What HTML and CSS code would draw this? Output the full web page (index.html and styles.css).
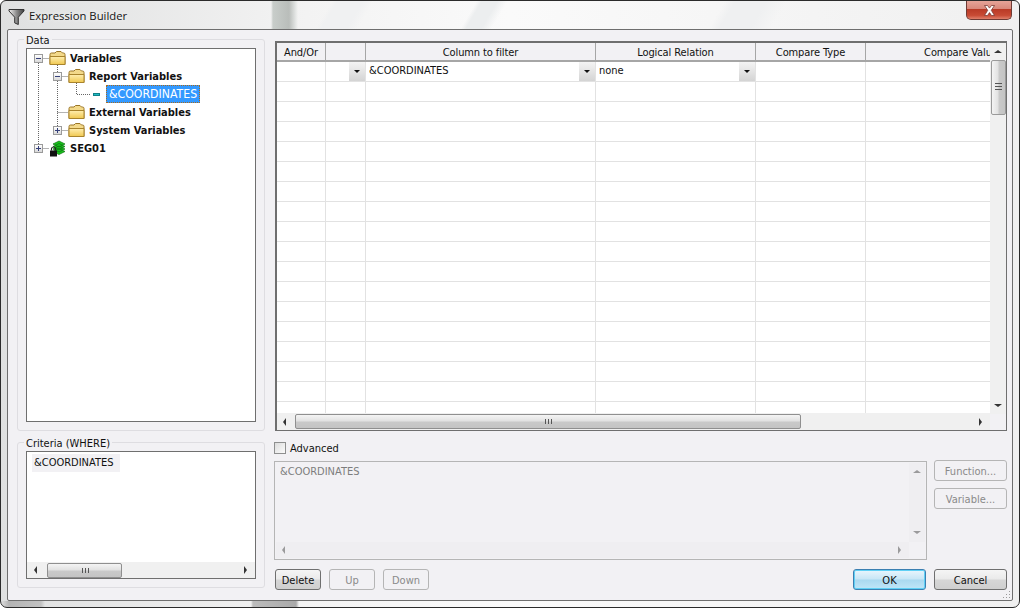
FILE: index.html
```html
<!DOCTYPE html>
<html lang="en">
<head>
<meta charset="utf-8">
<title>Expression Builder</title>
<link rel="stylesheet" href="styles.css">
</head>
<body>
<div class="window">
  <header class="titlebar">
    <svg class="funnel" width="17" height="18" viewBox="0 0 17 18"><defs><linearGradient id="fg" x1="0" x2="1" y1="0" y2="0"><stop offset="0" stop-color="#f2f2f2"/><stop offset=".5" stop-color="#8d8d8d"/><stop offset="1" stop-color="#3d3d3d"/></linearGradient></defs><path d="M1 1.500h15v1.500L10.300 9.200v7.300l-3.600-1.600V9.200L1 3z" fill="url(#fg)" stroke="#333" stroke-width="1"/></svg>
    <span class="wintitle">Expression Builder</span>
    <button class="close"><svg width="13" height="11" viewBox="0 0 13 11"><path d="M1.500 .5h3l2 2.600 2-2.600h3L8.300 5.300 11.500 10.500h-3l-2-2.900-2 2.900h-3l3.200-5.200z" fill="#fff" stroke="#7a3b33" stroke-width=".8"/></svg></button>
  </header>
  <main class="client">
    <div class="leftcol">
      <section class="group data">
        <span class="legend">Data</span>
        <div class="tree">
          <svg class="treelines" width="90" height="110" viewBox="0 0 90 110"><path d="M11.500 14V95M11.500 9.500H22M30.500 14V77M30.500 27.500H41M30.500 63.500H41M30.500 81.500H41M11.500 99.500H22M49.500 32V45.500H63" fill="none" stroke="#666" stroke-dasharray="1 1"/></svg>
          <div class="node l1"><i class="exp minus"></i><svg class="folder" viewBox="0 0 17 15"><use href="#fold"/></svg><b>Variables</b></div>
          <div class="node l2"><i class="exp minus"></i><svg class="folder" viewBox="0 0 17 15"><use href="#fold"/></svg><b>Report Variables</b></div>
          <div class="node l3"><i class="dash"></i><span class="sel">&amp;COORDINATES</span></div>
          <div class="node l2"><i class="exp none"></i><svg class="folder" viewBox="0 0 17 15"><use href="#fold"/></svg><b>External Variables</b></div>
          <div class="node l2"><i class="exp plus"></i><svg class="folder" viewBox="0 0 17 15"><use href="#fold"/></svg><b>System Variables</b></div>
          <div class="node l1"><i class="exp plus"></i>
            <svg class="seg" viewBox="0 0 17 17"><path d="M4 4l6-3 6 3-6 3zM4 6.500l6-3 6 3-6 3zM4 9l6-3 6 3-6 3zM4 11.500l6-3 6 3-6 3z" fill="#19c51c" stroke="#0b6d10" stroke-width=".7"/><rect x="1" y="10.500" width="7" height="6" fill="#111"/><path d="M2.500 10.500V9a2 2 0 0 1 4 0v1.500" fill="none" stroke="#222" stroke-width="1.200"/></svg>
            <b>SEG01</b></div>
        </div>
      </section>
      <section class="group criteria">
        <span class="legend">Criteria (WHERE)</span>
        <div class="listbox">
          <div class="listbody"><span class="chip">&amp;COORDINATES</span></div>
          <div class="hbar"><i class="arr left"></i><div class="track"><i class="thumb small"></i></div><i class="arr right"></i></div>
        </div>
      </section>
    </div>
    <div class="rightcol">
      <div class="gridbox">
        <div class="gridmain">
          <div class="gridview">
            <table class="grid">
              <colgroup><col class="c1"><col class="c2"><col class="c3"><col class="c4"><col class="c5"><col class="c6"></colgroup>
              <thead><tr><th>And/Or</th><th></th><th>Column to filter</th><th>Logical Relation</th><th>Compare Type</th><th>Compare Value</th></tr></thead>
              <tbody>
                <tr><td></td><td><div class="cell"><span></span><i class="drop"></i></div></td><td><div class="cell"><span class="up1">&amp;COORDINATES</span><i class="drop"></i></div></td><td><div class="cell"><span class="up1">none</span><i class="drop"></i></div></td><td></td><td></td></tr>
                <tr><td></td><td></td><td></td><td></td><td></td><td></td></tr>
                <tr><td></td><td></td><td></td><td></td><td></td><td></td></tr>
                <tr><td></td><td></td><td></td><td></td><td></td><td></td></tr>
                <tr><td></td><td></td><td></td><td></td><td></td><td></td></tr>
                <tr><td></td><td></td><td></td><td></td><td></td><td></td></tr>
                <tr><td></td><td></td><td></td><td></td><td></td><td></td></tr>
                <tr><td></td><td></td><td></td><td></td><td></td><td></td></tr>
                <tr><td></td><td></td><td></td><td></td><td></td><td></td></tr>
                <tr><td></td><td></td><td></td><td></td><td></td><td></td></tr>
                <tr><td></td><td></td><td></td><td></td><td></td><td></td></tr>
                <tr><td></td><td></td><td></td><td></td><td></td><td></td></tr>
                <tr><td></td><td></td><td></td><td></td><td></td><td></td></tr>
                <tr><td></td><td></td><td></td><td></td><td></td><td></td></tr>
                <tr><td></td><td></td><td></td><td></td><td></td><td></td></tr>
                <tr><td></td><td></td><td></td><td></td><td></td><td></td></tr>
                <tr><td></td><td></td><td></td><td></td><td></td><td></td></tr>
                <tr><td></td><td></td><td></td><td></td><td></td><td></td></tr>
              </tbody>
            </table>
          </div>
          <div class="vbar"><i class="arr upa"></i><div class="vtrack"><i class="vthumb"></i></div><i class="arr downa"></i></div>
        </div>
        <div class="hbar big"><i class="arr left"></i><div class="track"><i class="thumb large"></i></div><i class="arr right"></i><span class="corner"></span></div>
      </div>
      <label class="advanced"><i class="check"></i>Advanced</label>
      <div class="exprrow">
        <div class="expr">
          <div class="exprmain">
            <div class="exprtext">&amp;COORDINATES</div>
            <div class="vbar dis"><i class="arr upa"></i><div class="vtrack"></div><i class="arr downa"></i></div>
          </div>
          <div class="hbar dis"><i class="arr left"></i><div class="track"></div><i class="arr right"></i><span class="corner"></span></div>
        </div>
        <div class="sidebtns">
          <button class="btn dim wide">Function...</button>
          <button class="btn dim wide">Variable...</button>
        </div>
      </div>
      <div class="footer">
        <button class="btn delete">Delete</button>
        <button class="btn dim small">Up</button>
        <button class="btn dim small">Down</button>
        <span class="spacer"></span>
        <button class="btn ok wide">OK</button>
        <button class="btn wide">Cancel</button>
      </div>
    </div>
    <svg class="grip" width="11" height="11" viewBox="0 0 11 11"><path d="M8 2h1v1H8zM5 5h1v1H5zM8 5h1v1H8zM2 8h1v1H2zM5 8h1v1H5zM8 8h1v1H8z" fill="#9a9a9a"/></svg>
  </main>
  <svg class="defs" width="0" height="0"><defs><linearGradient id="fy" x1="0" x2="0" y1="0" y2="1"><stop offset="0" stop-color="#ffeeb0"/><stop offset="1" stop-color="#f0c850"/></linearGradient><g id="fold"><path d="M1 3.500Q1 2 2.500 2H6l1.500-1.500H12L13.500 2H14.500Q16 2 16 3.500V13.500H1z" fill="#f3d98a" stroke="#9a7526"/><path d="M1 5.500h15v8H1z" fill="url(#fy)" stroke="#a9842c"/></g></defs></svg>
</div>
</body>
</html>
```
FILE: styles.css
```css
* { box-sizing: border-box; }
html, body { margin: 0; padding: 0; }
body {
  width: 1020px;
  height: 608px;
  overflow: hidden;
  background: #fff;
  font-family: "DejaVu Sans", "Liberation Sans", sans-serif;
  font-stretch: condensed;
  font-size: 11px;
  color: #111;
}
.window {
  width: 1020px;
  height: 608px;
  border: 1px solid #2b2b2b;
  border-radius: 6px 6px 7px 7px;
  padding: 0 6px 6px;
  display: flex;
  flex-direction: column;
  background:
    linear-gradient(90deg, transparent 270px, #c8cdca 272px, #b9bdba 288px, #e6e8e7 295px, transparent 297px) 0 0/100% 28px no-repeat,
    linear-gradient(120deg, transparent 32%, #f0f1f2 32.500%, #f0f1f2 35%, transparent 36%, transparent 46%, #eceeef 46.500%, #eceeef 48%, transparent 49%, transparent 70%, #eff0f1 71%, #eff0f1 74%, transparent 76%) 0 0/100% 28px no-repeat,
    linear-gradient(90deg, transparent 0, #b4b4b4 8px, #c2c2c2 40px, transparent 44px, transparent 250px, #bcbcbc 252px, #a9a9a9 295px, transparent 298px) 0 bottom/100% 6px no-repeat,
    linear-gradient(90deg, #dfe0e0, #f3f3f3 30%, #fafafa 50%, #f0f0f0 100%);
}
.titlebar {
  height: 28px;
  flex: none;
  display: flex;
  align-items: center;
  position: relative;
  padding: 0 0 0 1px;
}
.funnel { flex: none; margin-top: 3px; }
.wintitle {
  margin-left: 4px;
  font-family: "Open Sans", "Liberation Sans", sans-serif;
  font-stretch: normal;
  font-size: 11.300px;
  color: #151515;
  text-shadow: 0 0 5px rgba(255,255,255,.9);
}
.close {
  position: absolute;
  right: 1px;
  top: 0;
  width: 46px;
  height: 19px;
  padding: 0;
  display: flex;
  align-items: center;
  justify-content: center;
  border: 1px solid #6e3b35;
  border-top: 0;
  border-radius: 0 0 5px 5px;
  background: linear-gradient(#e6a498 0, #d9897c 42%, #b93a26 46%, #c84b35 80%, #e0806b 100%);
}
.client {
  flex: 1;
  position: relative;
  display: grid;
  grid-template-columns: 248px 732px;
  column-gap: 10px;
  padding: 9px 6px 0 9px;
  background: #f2f1f4;
  border: 1px solid #6e6e6e;
  border-radius: 2px;
}
.leftcol { display: flex; flex-direction: column; gap: 11px; }
.group {
  position: relative;
  border: 1px solid #dedde1;
  border-radius: 3px;
  padding: 8px;
}
.data { height: 392px; }
.criteria { height: 146px; }
.legend {
  position: absolute;
  left: 6px;
  top: -5px;
  padding: 0 2px;
  background: #f2f1f4;
  line-height: 12px;
}
.tree {
  position: relative;
  height: 100%;
  background: #fff;
  border: 1px solid #6f6f6f;
}
.treelines { position: absolute; left: 0; top: 0; }
.node {
  position: relative;
  height: 18px;
  display: flex;
  align-items: center;
}
.node b { font-weight: 700; color: #111; }
.l1 { padding-left: 7px; }
.l2 { padding-left: 26px; }
.l3 { padding-left: 66px; }
.exp {
  width: 9px;
  height: 9px;
  flex: none;
  position: relative;
  border: 1px solid #9a9a9a;
  background: linear-gradient(#fff, #d8d8d8);
}
.exp.none { border: 0; background: none; }
.exp.minus::before, .exp.plus::before {
  content: "";
  position: absolute;
  left: 1px;
  top: 3px;
  width: 5px;
  height: 1px;
  background: #35407a;
}
.exp.plus::after {
  content: "";
  position: absolute;
  left: 3px;
  top: 1px;
  width: 1px;
  height: 5px;
  background: #35407a;
}
.folder { width: 17px; height: 15px; margin-left: 6px; margin-right: 4px; flex: none; }
.seg { width: 17px; height: 17px; margin-left: 6px; margin-right: 4px; flex: none; }
.dash {
  width: 7px;
  height: 3px;
  background: #1fbcc4;
  border: 1px solid #108088;
  flex: none;
}
.sel {
  margin-left: 6px;
  height: 18px;
  width: 94px;
  line-height: 18px;
  padding: 0 0 0 3px;
  font-size: 12.200px;
  color: #fff;
  background: #3399ff;
  outline: 1px dotted #a86a1c;
  outline-offset: -1px;
  white-space: nowrap;
}
.listbox {
  display: flex;
  flex-direction: column;
  height: 128px;
  background: #fff;
  border: 1px solid #6f6f6f;
}
.listbox .arr.left::before { left: 7px; }
.listbody { flex: 1; padding: 2px 0 0 5px; }
.chip { display: inline-block; height: 18px; line-height: 18px; padding: 0 6px 0 2px; background: #f2f1f4; }
.hbar {
  height: 16px;
  flex: none;
  display: flex;
  align-items: center;
  background: #f0f0f0;
}
.hbar .track { flex: 1; height: 16px; display: flex; align-items: center; }
.arr { width: 17px; height: 16px; flex: none; position: relative; display: block; }
.arr::before {
  content: "";
  position: absolute;
  left: 6px;
  top: 4px;
  border-style: solid;
  border-color: transparent;
}
.arr.left::before { border-width: 4px 3px 4px 0; border-right-color: #333; left: 6px; }
.arr.right::before { border-width: 4px 0 4px 3px; border-left-color: #333; }
.arr.upa::before { border-width: 0 4px 3px; border-bottom-color: #333; left: 4px; top: 7px; }
.arr.downa::before { border-width: 3px 4px 0; border-top-color: #333; left: 4px; top: 6px; }
.gridbox .arr.downa::before { top: 8px; }
.thumb {
  display: block;
  height: 15px;
  position: relative;
  border: 1px solid #8f8f8f;
  border-radius: 2px;
  background: linear-gradient(#f4f4f4 0, #e2e2e2 45%, #c9c9c9 55%, #c4c4c4 100%);
}
.thumb::after {
  content: "";
  position: absolute;
  left: 50%;
  top: 4px;
  width: 7px;
  height: 5px;
  margin-left: -3px;
  background: repeating-linear-gradient(90deg, #555 0 1px, transparent 1px 3px);
}
.thumb.small { width: 75px; margin-left: 3px; }
.thumb.large { width: 506px; margin-left: 1px; }
.gridbox {
  height: 390px;
  margin-top: 2px;
  border: 1px solid #6f6f6f;
  border-left-width: 2px;
  border-top-width: 2px;
  display: flex;
  flex-direction: column;
  background: #fff;
}
.gridmain { flex: 1; min-height: 0; display: flex; }
.gridview { width: 714px; overflow: hidden; }
.grid {
  border-collapse: separate;
  border-spacing: 0;
  table-layout: fixed;
  width: 780px;
}
.c1 { width: 49px; }
.c2 { width: 40px; }
.c3 { width: 230px; }
.c4 { width: 160px; }
.c5 { width: 110px; }
.c6 { width: 191px; }
.grid th {
  height: 19px;
  padding: 2px 0 0;
  background: #f2f1f4;
  border-right: 1px solid #a6a6a6;
  border-bottom: 2px solid #a6a6a6;
  font-weight: 400;
  letter-spacing: -.1px;
  text-align: center;
  white-space: nowrap;
  overflow: hidden;
}
.grid td {
  height: 20px;
  padding: 0;
  border-right: 1px solid #e2e2e2;
  border-bottom: 1px solid #e2e2e2;
}
.cell { display: flex; align-items: center; justify-content: space-between; height: 19px; padding-left: 3px; }
.up1 { margin-top: -2px; }
.drop {
  width: 16px;
  height: 19px;
  flex: none;
  position: relative;
  background: linear-gradient(#f4f4f4, #d4d4d4);
  display: block;
}
.drop::before {
  content: "";
  position: absolute;
  left: 5px;
  top: 8px;
  border-style: solid;
  border-color: #111 transparent transparent;
  border-width: 3px 3px 0;
}
.vbar { width: 16px; flex: none; display: flex; flex-direction: column; background: #f0f0f0; }
.vbar .arr { width: 16px; height: 17px; }
.vtrack { flex: 1; }
.vthumb {
  display: block;
  width: 15px;
  height: 55px;
  margin-left: 1px;
  position: relative;
  border: 1px solid #9a9a9a;
  border-radius: 2px;
  background: linear-gradient(90deg, #f4f4f4, #e2e2e2 45%, #c9c9c9 55%, #c4c4c4);
}
.vthumb::after {
  content: "";
  position: absolute;
  left: 3px;
  top: 22px;
  width: 7px;
  height: 7px;
  background: repeating-linear-gradient(#555 0 1px, transparent 1px 3px);
}
.hbar.big { height: 17px; background: #f0f0f0; }
.corner { width: 16px; height: 16px; flex: none; background: #f2f1f4; }
.advanced { display: flex; align-items: center; height: 13px; margin-top: 10px; margin-left: -1px; padding-top: 1px; }
.check {
  width: 12px;
  height: 12px;
  margin-right: 4px;
  border: 1px solid #8e8f8f;
  background: linear-gradient(135deg, #dcdcdc, #fbfbfb);
}
.exprrow { display: flex; margin-top: 7px; margin-left: -1px; }
.expr {
  width: 653px;
  height: 99px;
  border: 1px solid #b5b5b5;
  display: flex;
  flex-direction: column;
  padding: 1px;
}
.exprmain { flex: 1; display: flex; min-height: 0; }
.exprtext { flex: 1; padding: 2px 4px; color: #7d7d7d; }
.dis { background: #efeef1; }
.dis .arr::before { opacity: .45; }
.sidebtns { margin-left: 7px; display: flex; flex-direction: column; gap: 7px; margin-top: -1px; }
.btn {
  height: 21px;
  padding: 1px 0 0;
  font: inherit;
  color: #111;
  border: 1px solid #6f6f6f;
  border-radius: 3px;
  background: linear-gradient(#f5f5f5 0, #eaeaea 48%, #d6d6d6 52%, #cfcfcf 100%);
}
.btn.wide { width: 73px; }
.btn.dim {
  color: #8a8a8a;
  border-color: #b5b5b5;
  background: #f2f1f4;
}
.btn.small { width: 46px; }
.btn.delete { width: 46px; }
.btn.ok {
  border-color: #3c7fb1;
  box-shadow: inset 0 0 0 1px #5fd0f5;
  background: linear-gradient(#e9f6fd 0, #c7e6f6 48%, #a9d9f0 52%, #bfe6f8 100%);
}
.footer { display: flex; gap: 8px; margin-top: 9px; }
.spacer { flex: 1; }
.grip { position: absolute; right: 0; bottom: 0; }
.defs { position: absolute; }
```
